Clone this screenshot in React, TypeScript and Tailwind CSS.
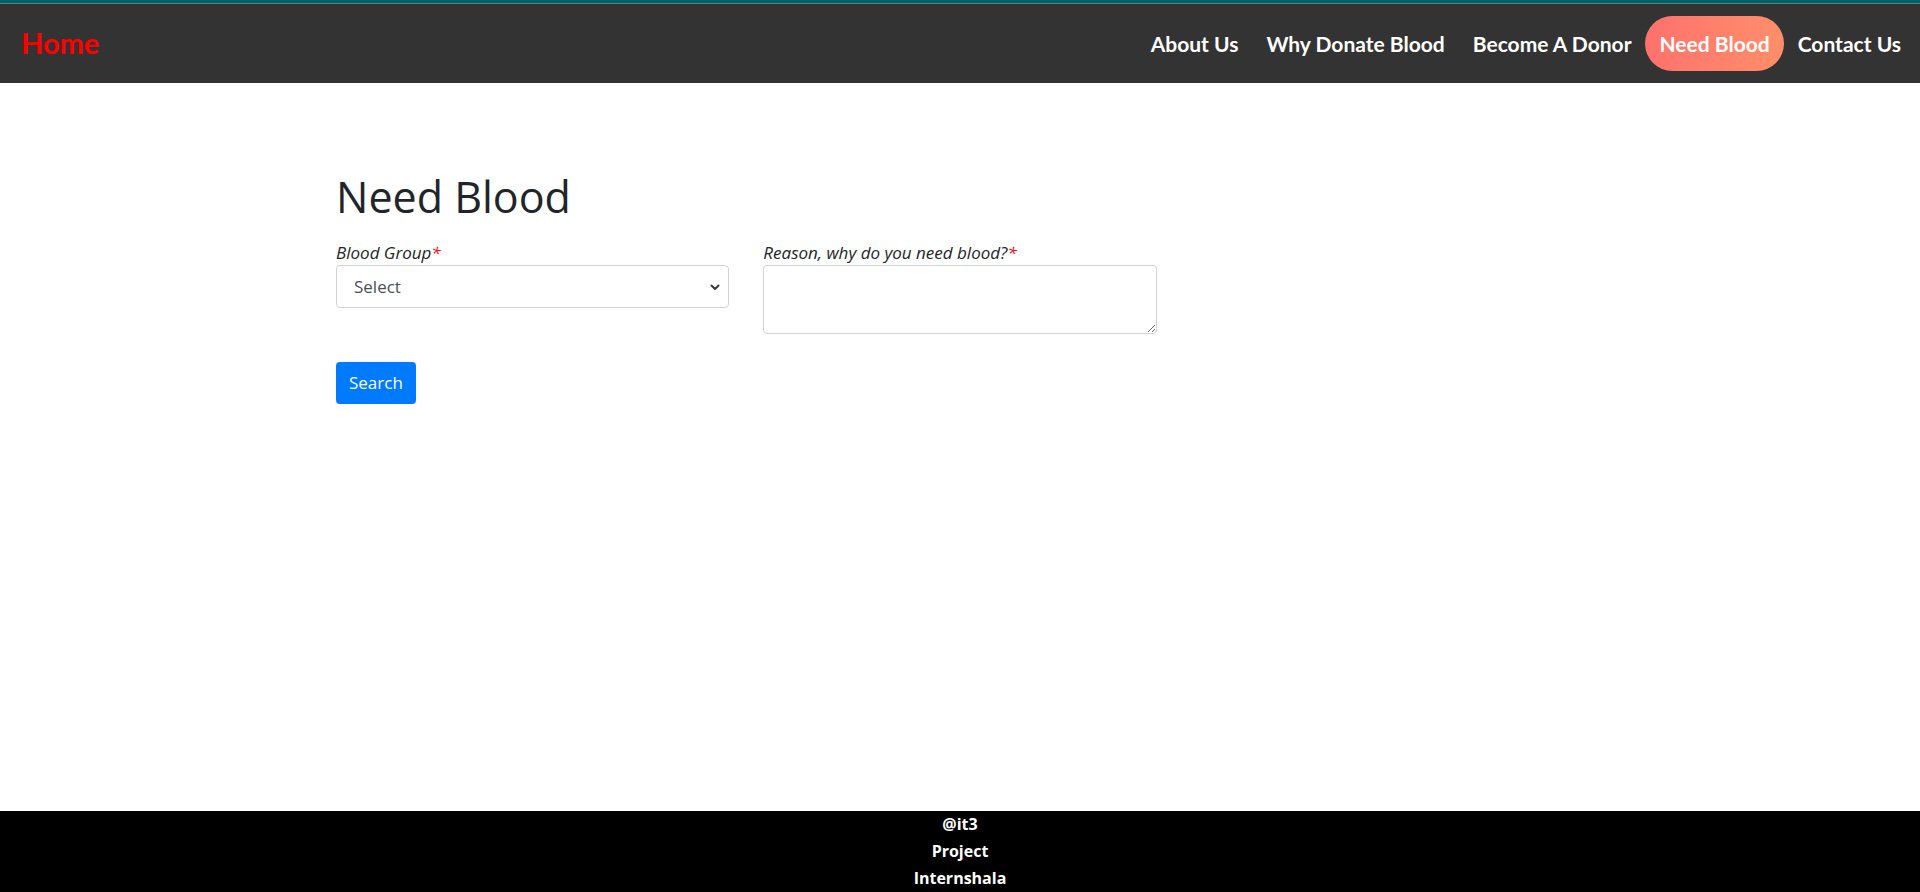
import React, { useState } from "react";

const navLinks = ["About Us", "Why Donate Blood", "Become A Donor", "Need Blood", "Contact Us"];

const groups = ["A+", "A-", "B+", "B-", "AB+", "AB-", "O+", "O-"];

export default function App() {
  const [group, setGroup] = useState("");
  const [reason, setReason] = useState("");

  return (
    <div className="min-h-screen flex flex-col bg-white font-['Open_Sans',sans-serif] text-[#212529]">
      <nav className="bg-[#333333]">
        <div className="h-[4px] bg-[#075e63] border-b border-[#3a8c8c]" />
        <div className="h-[79px] flex items-center justify-between pl-[21px] pr-[5px]">
          <a className="text-[#ff0000] font-['Lato',sans-serif] font-bold text-[29px] leading-none pb-[2px]">
            Home
          </a>
          <ul className="flex items-center font-['Lato',sans-serif] font-bold text-[21px] text-white">
            {navLinks.map((link) => (
              <li key={link}>
                <a
                  className={
                    link === "Need Blood"
                      ? "flex items-center h-[55px] px-[14px] rounded-full bg-gradient-to-r from-[#ff716d] to-[#ff8e69]"
                      : "flex items-center h-[55px] px-[14px]"
                  }
                >
                  {link}
                </a>
              </li>
            ))}
          </ul>
        </div>
      </nav>

      <main className="flex-1 pt-[88px]">
        <div className="mx-auto w-[1248px]">
          <h1 className="text-[43px] font-medium leading-[1.2] mb-[17px]">Need Blood</h1>
          <div className="grid grid-cols-3 gap-x-[34px] text-[17px]">
            <div>
              <label className="block italic leading-[1.5]">
                Blood Group<span className="text-[#ff0000]">*</span>
              </label>
              <div className="relative">
                <select
                  value={group}
                  onChange={(e) => setGroup(e.target.value)}
                  className="appearance-none w-full h-[43px] border border-[#ced4da] rounded-[4px] pl-[17px] pr-[32px] text-[#495057] bg-white outline-none"
                >
                  <option value="">Select</option>
                  {groups.map((g) => (
                    <option key={g} value={g}>
                      {g}
                    </option>
                  ))}
                </select>
                <svg
                  className="absolute right-[9px] top-[18px] pointer-events-none"
                  width="10"
                  height="8"
                  viewBox="0 0 10 8"
                  fill="none"
                >
                  <path d="M1.5 2.5L5 6L8.5 2.5" stroke="#343a40" strokeWidth="2" strokeLinecap="round" strokeLinejoin="round" />
                </svg>
              </div>
            </div>
            <div>
              <label className="block italic leading-[1.5]">
                Reason, why do you need blood?<span className="text-[#ff0000]">*</span>
              </label>
              <textarea
                value={reason}
                onChange={(e) => setReason(e.target.value)}
                className="block w-full h-[69px] border border-[#ced4da] rounded-[4px] px-[13px] py-[6px] text-[#495057] outline-none"
              />
            </div>
          </div>
          <button className="mt-[28px] h-[42px] px-[13px] rounded-[4px] bg-[#007bff] text-white text-[17px]">
            Search
          </button>
        </div>
      </main>

      <footer className="bg-black text-white font-['Open_Sans',sans-serif] font-bold text-[16px] leading-[27px] text-center">
        <div>@it3</div>
        <div>Project</div>
        <div>Internshala</div>
      </footer>
    </div>
  );
}
